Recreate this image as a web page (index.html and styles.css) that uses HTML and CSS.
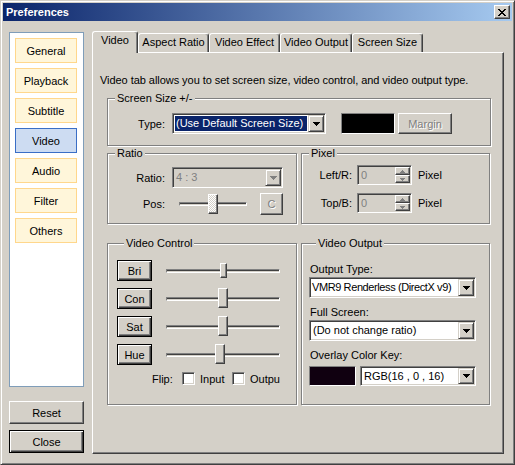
FILE: index.html
```html
<!DOCTYPE html>
<html lang="en">
<head>
    <meta charset="UTF-8">
    <title>Preferences</title>
    <link rel="stylesheet" href="styles.css">
</head>
<body>
<div class="window">
    <div class="titlebar">
        <span class="title">Preferences</span>
        <button class="title-close" aria-label="Close">
            <svg width="8" height="7" viewBox="0 0 8 7" shape-rendering="crispEdges"><path d="M0 0h2v1H0zM6 0h2v1H6zM1 1h2v1H1zM5 1h2v1H5zM2 2h4v1H2zM3 3h2v1H3zM2 4h4v1H2zM1 5h2v1H1zM5 5h2v1H5zM0 6h2v1H0zM6 6h2v1H6z" fill="#000"/></svg>
        </button>
    </div>

    <div class="main">
        <!-- left category list -->
        <div class="sidebar">
            <div class="nav">
                <div class="nav-item">General</div>
                <div class="nav-item">Playback</div>
                <div class="nav-item">Subtitle</div>
                <div class="nav-item active">Video</div>
                <div class="nav-item">Audio</div>
                <div class="nav-item">Filter</div>
                <div class="nav-item">Others</div>
            </div>
            <button class="btn side-btn reset">Reset</button>
            <button class="btn default side-btn close">Close</button>
        </div>

        <!-- tabbed page -->
        <div class="tabs">
            <div class="tabstrip">
                <div class="tab active" style="width:46px">Video</div>
                <div class="tab" style="width:71px">Aspect Ratio</div>
                <div class="tab" style="width:71px">Video Effect</div>
                <div class="tab" style="width:72px">Video Output</div>
                <div class="tab" style="width:71px">Screen Size</div>
            </div>
            <div class="panel">
                <p class="intro">Video tab allows you to set screen size, video control, and video output type.</p>

                <fieldset class="group screen">
                    <legend>Screen Size +/-</legend>
                    <div class="row">
                        <span class="lbl">Type:</span>
                        <div class="select w-type">
                            <span class="value selected">(Use Default Screen Size)</span>
                            <span class="drop"><svg width="7" height="4" viewBox="0 0 7 4" shape-rendering="crispEdges"><path d="M0 0h7v1H0zM1 1h5v1H1zM2 2h3v1H2zM3 3h1v1H3z" fill="#000"/></svg></span>
                        </div>
                        <span class="swatch black"></span>
                        <button class="btn disabled margin-btn">Margin</button>
                    </div>
                </fieldset>

                <div class="pair top-pair">
                    <fieldset class="group ratio">
                        <legend>Ratio</legend>
                        <div class="row">
                            <span class="lbl">Ratio:</span>
                            <div class="select off w-ratio">
                                <span class="value">4 : 3</span>
                                <span class="drop"><svg width="7" height="4" viewBox="0 0 7 4" shape-rendering="crispEdges"><path d="M0 0h7v1H0zM1 1h5v1H1zM2 2h3v1H2zM3 3h1v1H3z" fill="#808080"/></svg></span>
                            </div>
                        </div>
                        <div class="row pos-row">
                            <span class="lbl">Pos:</span>
                            <div class="slider pos-slider">
                                <div class="track"></div>
                                <div class="thumb dither" style="left:36px"></div>
                            </div>
                            <button class="btn disabled c-btn">C</button>
                        </div>
                    </fieldset>

                    <fieldset class="group pixel">
                        <legend>Pixel</legend>
                        <div class="row px-row">
                            <span class="lbl">Left/R:</span>
                            <div class="spin">
                                <span class="value">0</span>
                                <span class="spin-btns">
                                    <span class="spin-btn"><svg width="5" height="3" viewBox="0 0 5 3" shape-rendering="crispEdges"><path d="M2 0h1v1H2zM1 1h3v1H1zM0 2h5v1H0z" fill="#808080"/></svg></span>
                                    <span class="spin-btn"><svg width="5" height="3" viewBox="0 0 5 3" shape-rendering="crispEdges"><path d="M0 0h5v1H0zM1 1h3v1H1zM2 2h1v1H2z" fill="#808080"/></svg></span>
                                </span>
                            </div>
                            <span class="unit">Pixel</span>
                        </div>
                        <div class="row px-row">
                            <span class="lbl">Top/B:</span>
                            <div class="spin">
                                <span class="value">0</span>
                                <span class="spin-btns">
                                    <span class="spin-btn"><svg width="5" height="3" viewBox="0 0 5 3" shape-rendering="crispEdges"><path d="M2 0h1v1H2zM1 1h3v1H1zM0 2h5v1H0z" fill="#808080"/></svg></span>
                                    <span class="spin-btn"><svg width="5" height="3" viewBox="0 0 5 3" shape-rendering="crispEdges"><path d="M0 0h5v1H0zM1 1h3v1H1zM2 2h1v1H2z" fill="#808080"/></svg></span>
                                </span>
                            </div>
                            <span class="unit">Pixel</span>
                        </div>
                    </fieldset>
                </div>

                <div class="pair bottom-pair">
                    <fieldset class="group control">
                        <legend>Video Control</legend>
                        <div class="ctl-row">
                            <button class="btn default ctl-btn">Bri</button>
                            <div class="slider ctl-slider">
                                <div class="track"></div>
                                <div class="thumb small" style="left:54px"></div>
                            </div>
                        </div>
                        <div class="ctl-row">
                            <button class="btn default ctl-btn">Con</button>
                            <div class="slider ctl-slider">
                                <div class="track"></div>
                                <div class="thumb" style="left:52px"></div>
                            </div>
                        </div>
                        <div class="ctl-row">
                            <button class="btn default ctl-btn">Sat</button>
                            <div class="slider ctl-slider">
                                <div class="track"></div>
                                <div class="thumb" style="left:52px"></div>
                            </div>
                        </div>
                        <div class="ctl-row">
                            <button class="btn default ctl-btn">Hue</button>
                            <div class="slider ctl-slider">
                                <div class="track"></div>
                                <div class="thumb" style="left:49px"></div>
                            </div>
                        </div>
                        <div class="flip-row">
                            <span class="flip-lbl">Flip:</span>
                            <span class="check"></span>
                            <span class="check-lbl first">Input</span>
                            <span class="check"></span>
                            <span class="check-lbl">Outpu</span>
                        </div>
                    </fieldset>

                    <fieldset class="group output">
                        <legend>Video Output</legend>
                        <div class="out-lbl first">Output Type:</div>
                        <div class="select w-out">
                            <span class="value tight">VMR9 Renderless (DirectX v9)</span>
                            <span class="drop"><svg width="7" height="4" viewBox="0 0 7 4" shape-rendering="crispEdges"><path d="M0 0h7v1H0zM1 1h5v1H1zM2 2h3v1H2zM3 3h1v1H3z" fill="#000"/></svg></span>
                        </div>
                        <div class="out-lbl">Full Screen:</div>
                        <div class="select w-out">
                            <span class="value">(Do not change ratio)</span>
                            <span class="drop"><svg width="7" height="4" viewBox="0 0 7 4" shape-rendering="crispEdges"><path d="M0 0h7v1H0zM1 1h5v1H1zM2 2h3v1H2zM3 3h1v1H3z" fill="#000"/></svg></span>
                        </div>
                        <div class="out-lbl">Overlay Color Key:</div>
                        <div class="row key-row">
                            <span class="swatch key"></span>
                            <div class="select w-key">
                                <span class="value">RGB(16 , 0 , 16)</span>
                                <span class="drop"><svg width="7" height="4" viewBox="0 0 7 4" shape-rendering="crispEdges"><path d="M0 0h7v1H0zM1 1h5v1H1zM2 2h3v1H2zM3 3h1v1H3z" fill="#000"/></svg></span>
                            </div>
                        </div>
                    </fieldset>
                </div>
            </div>
        </div>
    </div>
</div>
</body>
</html>
```

FILE: styles.css
```css
* {
    box-sizing: border-box;
}
body {
    margin: 0;
    font-family: "Liberation Sans", Arial, sans-serif;
    font-size: 11px;
    color: #000;
    background: #d4d0c8;
}
.window {
    width: 515px;
    height: 465px;
    background: #d4d0c8;
    border: 1px solid;
    border-color: #d4d0c8 #404040 #404040 #d4d0c8;
    box-shadow: inset 1px 1px #fff, inset -1px -1px #808080;
    padding: 2px;
}
.titlebar {
    height: 18px;
    display: flex;
    align-items: center;
    justify-content: space-between;
    padding: 0 2px 0 2px;
    background: linear-gradient(to right, #0a246a, #a6caf0);
}
.title {
    color: #fff;
    font-weight: bold;
    padding-left: 1px;
}
.title-close {
    width: 16px;
    height: 14px;
    padding: 0;
    display: flex;
    align-items: center;
    justify-content: center;
    background: #d4d0c8;
    border: 1px solid;
    border-color: #fff #404040 #404040 #fff;
    box-shadow: inset -1px -1px #808080;
}

.main {
    display: flex;
    gap: 8px;
    padding: 10px 0 0 6px;
}

/* sidebar */
.sidebar {
    width: 75px;
    margin-top: 1px;
    display: flex;
    flex-direction: column;
}
.nav {
    height: 355px;
    border: 1px solid #7f9db9;
    background: #fff;
    padding: 5px 0 0 5px;
    display: flex;
    flex-direction: column;
    gap: 5px;
}
.nav-item {
    width: 62px;
    height: 25px;
    border: 1px solid #ffd78c;
    background: #fff6da;
    display: flex;
    align-items: center;
    justify-content: center;
}
.nav-item.active {
    border-color: #3a6ec6;
    background: #cddcf2;
}

/* buttons */
.btn {
    font: inherit;
    color: #000;
    padding: 0;
    background: #d4d0c8;
    border: 1px solid;
    border-color: #fff #404040 #404040 #fff;
    box-shadow: inset -1px -1px #808080;
}
.btn.default {
    border-color: #000;
    box-shadow: inset 1px 1px #fff, inset -1px -1px #404040, inset -2px -2px #808080;
}
.btn.disabled {
    color: #808080;
    text-shadow: 1px 1px #fff;
}
.side-btn {
    width: 75px;
    height: 23px;
}
.reset {
    margin-top: 14px;
}
.close {
    margin-top: 6px;
}

/* tabs */
.tabs {
    width: 412px;
}
.tabstrip {
    display: flex;
    height: 21px;
    align-items: flex-end;
}
.tab {
    height: 19px;
    border: 1px solid;
    border-bottom: none;
    border-color: #fff #404040 #fff #fff;
    border-radius: 3px 3px 0 0;
    box-shadow: inset -1px 0 #808080;
    text-align: center;
    line-height: 17px;
    white-space: nowrap;
}
.tab.active {
    height: 22px;
    margin-bottom: -1px;
    background: #d4d0c8;
    position: relative;
    z-index: 1;
    line-height: 16px;
}
.panel {
    height: 402px;
    border: 1px solid;
    border-color: #fff #404040 #404040 #fff;
    box-shadow: inset -1px -1px #808080;
    padding: 0 12px 0 14px;
}
.intro {
    margin: 21px 0 0 -7px;
    line-height: 13px;
    white-space: nowrap;
    letter-spacing: -0.05px;
}

/* group boxes */
.group {
    margin: 0;
    min-width: 0;
    padding: 0;
    border: 1px solid #808080;
    box-shadow: inset 1px 1px #fff, 1px 1px #fff;
}
.group legend {
    margin-left: 7px;
    padding: 0 2px;
    line-height: 13px;
    background: #d4d0c8;
}
.screen {
    margin-top: 5px;
    padding: 8px 0 11px 0;
}
.pair {
    display: grid;
    grid-template-columns: 190px 189px;
    gap: 4px;
}
.top-pair {
    margin-top: 1px;
}
.bottom-pair {
    margin-top: 13px;
}
.row {
    display: flex;
    align-items: center;
    height: 21px;
}
.lbl {
    width: 57px;
    margin-right: 7px;
    text-align: right;
}
.swatch {
    display: block;
    height: 21px;
    border: 1px solid;
    border-color: #808080 #fff #fff #808080;
}
.swatch.black {
    width: 54px;
    margin-left: 15px;
    background: #000;
}
.margin-btn {
    width: 54px;
    height: 21px;
    margin-left: 3px;
}

/* combo boxes */
.select {
    display: flex;
    height: 21px;
    padding: 1px;
    background: #fff;
    border: 1px solid;
    border-color: #808080 #fff #fff #808080;
    box-shadow: inset 1px 1px #404040, inset -1px -1px #d4d0c8;
}
.select .value {
    flex: 1;
    min-width: 0;
    padding-left: 2px;
    line-height: 17px;
    white-space: nowrap;
    overflow: hidden;
}
.select .value.tight {
    padding-left: 1px;
    letter-spacing: -0.4px;
}
.select .value.selected {
    margin: 1px;
    padding-left: 1px;
    line-height: 15px;
    background: #0a246a;
    color: #fff;
}
.select.off {
    background: #d4d0c8;
}
.select.off .value {
    color: #808080;
}
.drop {
    width: 16px;
    flex-shrink: 0;
    display: flex;
    align-items: center;
    justify-content: center;
    background: #d4d0c8;
    border: 1px solid;
    border-color: #d4d0c8 #404040 #404040 #d4d0c8;
    box-shadow: inset 1px 1px #fff, inset -1px -1px #808080;
}
.w-type {
    width: 154px;
}
.w-ratio {
    width: 111px;
}
.w-out {
    width: 167px;
}
.w-key {
    width: 116px;
    margin-left: 4px;
}

/* ratio group */
.ratio {
    padding: 7px 0 8px 0;
}
.pos-row {
    margin-top: 5px;
    height: 22px;
}
.slider {
    position: relative;
    display: flex;
    align-items: center;
}
.track {
    flex: 1;
    height: 4px;
    border: 1px solid;
    border-color: #808080 #fff #fff #808080;
    box-shadow: inset 0 1px #404040;
}
.thumb {
    position: absolute;
    top: 0;
    width: 10px;
    height: 20px;
    background: #d4d0c8;
    border: 1px solid;
    border-color: #fff #404040 #404040 #fff;
    box-shadow: inset -1px -1px #808080;
}
.thumb.small {
    width: 7px;
    height: 15px;
    top: 3px;
}
.thumb.dither {
    background: repeating-conic-gradient(#fff 0 25%, #d4d0c8 0 50%) 0 0 / 2px 2px;
    top: 1px;
}
.pos-slider {
    width: 81px;
    height: 22px;
    padding: 0 6px 0 7px;
}
.c-btn {
    width: 23px;
    height: 22px;
    margin-left: 7px;
}

/* pixel group */
.pixel {
    padding: 5px 0 0 0;
}
.pixel .lbl {
    width: 50px;
    margin-right: 5px;
}
.px-row {
    height: 20px;
    margin-bottom: 8px;
}
.spin {
    display: flex;
    width: 55px;
    height: 20px;
    padding: 1px;
    background: #d4d0c8;
    border: 1px solid;
    border-color: #808080 #fff #fff #808080;
    box-shadow: inset 1px 1px #404040, inset -1px -1px #d4d0c8;
}
.spin .value {
    flex: 1;
    padding-left: 2px;
    line-height: 16px;
    color: #808080;
}
.spin-btns {
    width: 15px;
    display: flex;
    flex-direction: column;
}
.spin-btn {
    flex: 1;
    display: flex;
    align-items: center;
    justify-content: center;
    border: 1px solid;
    border-color: #fff #404040 #404040 #fff;
    box-shadow: inset -1px -1px #808080;
}
.unit {
    margin-left: 6px;
}

/* video control group */
.control {
    padding: 10px 0 19px 9px;
}
.ctl-row {
    display: flex;
    align-items: center;
    height: 21px;
    margin-bottom: 7px;
}
.ctl-btn {
    width: 35px;
    height: 21px;
}
.ctl-slider {
    width: 114px;
    height: 21px;
    margin-left: 14px;
}
.flip-row {
    display: flex;
    align-items: center;
    height: 13px;
    margin-top: 4px;
    padding-left: 35px;
}
.flip-lbl {
    width: 30px;
}
.check {
    width: 13px;
    height: 13px;
    background: #fff;
    border: 1px solid;
    border-color: #808080 #fff #fff #808080;
    box-shadow: inset 1px 1px #404040, inset -1px -1px #d4d0c8;
}
.check-lbl {
    margin-left: 5px;
}
.check-lbl.first {
    width: 32px;
}

/* video output group */
.output {
    padding: 13px 0 0 7px;
}
.out-lbl {
    line-height: 13px;
    margin: 8px 0 1px 1px;
}
.out-lbl.first {
    margin-top: 0;
}
.key-row {
    height: 20px;
    margin-top: 4px;
}
.swatch.key {
    width: 47px;
    height: 20px;
    background: #100010;
}
.key-row .select {
    height: 20px;
}
```
